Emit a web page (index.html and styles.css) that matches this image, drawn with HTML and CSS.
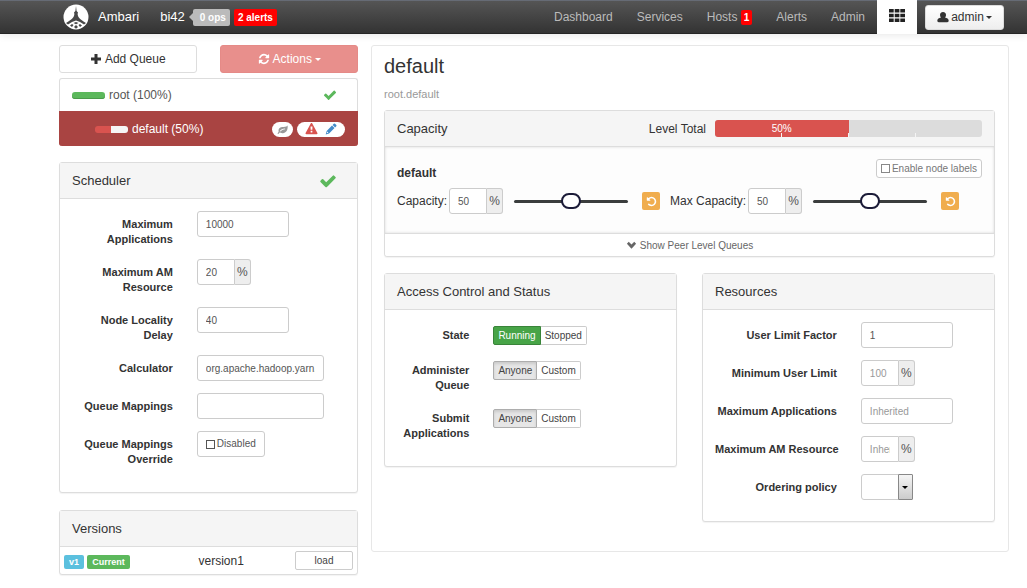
FILE: index.html
```html
<!DOCTYPE html>
<html lang="en">
<head>
  <meta charset="UTF-8" />
  <title>Ambari - Queue Manager</title>
  <link rel="stylesheet" href="styles.css">
</head>
<body>
  <svg class="sprite" aria-hidden="true">
    <symbol id="i-check" viewBox="0 0 1792 1792"><path d="M1671 566q0 40-28 68l-724 724-136 136q-28 28-68 28t-68-28l-136-136-362-362q-28-28-28-68t28-68l136-136q28-28 68-28t68 28l294 295 656-657q28-28 68-28t68 28l136 136q28 28 28 68z"/></symbol>
    <symbol id="i-plus" viewBox="0 0 12 12"><path d="M4.500 1h3v3.500h3.500v3h-3.500v3.500h-3v-3.500h-3.500v-3h3.500z"/></symbol>
    <symbol id="i-refresh" viewBox="0 0 1792 1792"><path d="M1639 1056q0 5-1 7-64 268-268 434.500t-478 166.500q-146 0-282.500-55t-243.500-157l-129 129q-19 19-45 19t-45-19-19-45v-448q0-26 19-45t45-19h448q26 0 45 19t19 45-19 45l-137 137q71 66 161 102t187 36q134 0 250-65t186-179q11-17 53-117 8-23 30-23h192q13 0 22.500 9.500t9.500 22.500zm25-800v448q0 26-19 45t-45 19h-448q-26 0-45-19t-19-45 19-45l138-138q-148-137-349-137-134 0-250 65t-186 179q-11 17-53 117-8 23-30 23h-199q-13 0-22.500-9.500t-9.500-22.500v-7q65-268 270-434.500t480-166.500q146 0 284 55.500t245 156.500l130-129q19-19 45-19t45 19 19 45z"/></symbol>
    <symbol id="i-warning" viewBox="0 0 1792 1792"><path d="M1024 1375v-190q0-14-9.500-23.500t-22.500-9.500h-192q-13 0-22.500 9.500t-9.500 23.500v190q0 14 9.500 23.500t22.500 9.500h192q13 0 22.500-9.500t9.500-23.500zm-2-374l18-459q0-12-10-19-13-11-24-11h-220q-11 0-24 11-10 7-10 21l17 457q0 10 10 16.500t24 6.500h185q14 0 23.500-6.500t10.500-16.500zm-14-934l768 1408q35 63-2 126-17 29-46.500 46t-63.500 17h-1536q-34 0-63.500-17t-46.500-46q-37-63-2-126l768-1408q17-31 47-49t65-18 65 18 47 49z"/></symbol>
    <symbol id="i-undo" viewBox="0 0 1792 1792"><path d="M1664 896q0 156-61 298t-164 245-245 164-298 61q-172 0-327-72.500t-264-204.500q-7-10-6.500-22.500t8.500-20.500l137-138q10-9 25-9 16 2 23 12 73 95 179 147t225 52q104 0 198.500-40.500t163.500-109.500 109.500-163.500 40.500-198.500-40.500-198.500-109.500-163.500-163.500-109.500-198.500-40.500q-98 0-188 35.500t-160 101.500l137 138q31 30 14 69-17 40-59 40h-448q-26 0-45-19t-19-45v-448q0-42 40-59 39-17 69 14l130 129q107-101 244.500-156.500t284.500-55.500q156 0 298 61t245 164 164 245 61 298z"/></symbol>
    <symbol id="i-chevron" viewBox="0 0 12 12"><path d="M1 4l2-2 3 3 3-3 2 2-5 5.500z"/></symbol>
    <symbol id="i-leaf" viewBox="0 0 12 12"><path d="M11.500 1.500c.5 3-.3 7-4 8.200-2 .6-3.700 0-4.600-.3L1.500 11l-1-.6 1.300-1.900C1 5.500 2.700 3.700 5.500 3.300c2.500-.3 4.500 0 6-1.800zM8.800 5C6 5 4.300 6 3 7.800l.6.4C5 6.600 6.500 5.800 8.800 5.600z"/></symbol>
    <symbol id="i-pencil" viewBox="0 0 12 12"><path d="M8.800.8q.6-.5 1.200 0L11.300 2q.5.600 0 1.200L10.100 4.400 7.600 1.900zM7 2.500L9.500 5l-5.400 5.400-3.400 1 1-3.400zM2.300 8.600l-.5 1.700 1.600-.5z"/></symbol>
    <symbol id="i-grid" viewBox="0 0 16 13"><path d="M0 0h4.700v3.500H0zM5.700 0h4.700v3.500H5.700zM11.300 0H16v3.500h-4.700zM0 4.700h4.700v3.500H0zM5.700 4.700h4.700v3.500H5.700zM11.300 4.700H16v3.500h-4.700zM0 9.400h4.700v3.500H0zM5.700 9.400h4.700v3.500H5.700zM11.300 9.400H16v3.500h-4.700z"/></symbol>
    <symbol id="i-user" viewBox="0 0 12 12"><path d="M6 1c2 0 3 1.400 3 3 0 1-.4 2-1 2.600 2 .4 3.700 1.200 3.700 3.200 0 .8-.6 1.400-1.400 1.400H1.700C.9 11.200.3 10.600.3 9.800c0-2 1.700-2.800 3.700-3.200C3.400 6 3 5 3 4c0-1.600 1-3 3-3z"/></symbol>
  </svg>

  <header class="navbar">
    <a class="brand" href="#">
      <svg class="logo" viewBox="0 0 26 26" aria-hidden="true">
        <circle cx="13" cy="13" r="12.500" fill="#fff"/>
        <path d="M13 2l.6 5 1.400 1.500-.4 1.500c.4 3.500 2.400 5.500 8.400 9l-2 1.500-4-2.500-4-1.500-4 1.500-4 2.500L3 19c6-3.500 8-5.500 8.400-9L11 8.500 12.400 7z" fill="#484848"/>
        <path d="M7 21.500l2-1.500 1.500 1L9 23zM10.500 19l2.500-1 2.500 1-2.500 1.200zM15.500 21L17 20l2 1.500-2 1.500zM11 23l2-2 2 2-2 1.700z" fill="#484848"/>
      </svg>
      Ambari
    </a>
    <a class="cluster" href="#">bi42</a>
    <a class="tag ops" href="#">0 ops</a>
    <a class="tag alerts" href="#">2 alerts</a>
    <nav class="menu">
      <a href="#">Dashboard</a>
      <a href="#">Services</a>
      <a href="#">Hosts <span class="count">1</span></a>
      <a href="#">Alerts</a>
      <a href="#">Admin</a>
      <a class="views" href="#" aria-label="Views"><svg class="icon grid-icon"><use href="#i-grid"/></svg></a>
    </nav>
    <button class="user" type="button"><svg class="icon"><use href="#i-user"/></svg> admin <span class="caret"></span></button>
  </header>

  <main class="container">
    <div class="sidebar">
      <div class="toolbar">
        <button class="btn add" type="button"><svg class="icon"><use href="#i-plus"/></svg> Add Queue</button>
        <button class="btn actions" type="button"><svg class="icon"><use href="#i-refresh"/></svg> Actions <span class="caret"></span></button>
      </div>

      <div class="queues">
        <a class="queue" href="#">
          <span class="bar green"></span> root (100%)
          <svg class="icon ok push"><use href="#i-check"/></svg>
        </a>
        <a class="queue child active" href="#">
          <span class="bar half"></span> default (50%)
          <span class="pill push leaf"><svg class="icon small"><use href="#i-leaf"/></svg></span>
          <span class="pill"><svg class="icon warn"><use href="#i-warning"/></svg><svg class="icon edit"><use href="#i-pencil"/></svg></span>
        </a>
      </div>

      <section class="panel scheduler">
        <div class="panel-heading">
          <h2>Scheduler</h2>
          <svg class="icon ok large push"><use href="#i-check"/></svg>
        </div>
        <form class="panel-body">
          <div class="row"><label for="maxApps">Maximum Applications</label><input class="field" id="maxApps" type="text" value="10000"></div>
          <div class="row"><label for="maxAm">Maximum AM Resource</label><div class="group"><input id="maxAm" type="text" value="20"><span>%</span></div></div>
          <div class="row"><label for="delay">Node Locality Delay</label><input class="field" id="delay" type="text" value="40"></div>
          <div class="row"><label for="calc">Calculator</label><input class="field long" id="calc" type="text" value="org.apache.hadoop.yarn.util.resource.DefaultResourceCalculator"></div>
          <div class="row"><label for="mappings">Queue Mappings</label><input class="field long" id="mappings" type="text"></div>
          <div class="row"><label for="override">Queue Mappings Override</label><label class="check"><input id="override" type="checkbox"> Disabled</label></div>
        </form>
      </section>

      <section class="panel versions">
        <div class="panel-heading"><h2>Versions</h2></div>
        <table>
          <tr>
            <td><span class="badge blue">v1</span> <span class="badge">Current</span></td>
            <td>version1</td>
            <td><button class="mini load" type="button">load</button></td>
          </tr>
        </table>
      </section>
    </div>

    <div class="content">
      <h1>default</h1>
      <p class="path">root.default</p>

      <section class="panel capacity">
        <div class="panel-heading">
          <h2>Capacity</h2>
          <span class="push">Level Total</span>
          <div class="progress">
            <div class="progress-bar" style="width: 50%">50%</div>
            <div class="ticks"><i></i><i></i><i></i><i></i></div>
          </div>
        </div>
        <div class="capacity-body">
          <div class="capacity-title">
            <strong>default</strong>
            <label class="check labels"><input type="checkbox"> Enable node labels</label>
          </div>
          <div class="sliders">
            <div class="slider">
              <label for="cap">Capacity:</label>
              <div class="group"><input id="cap" type="text" value="50"><span>%</span></div>
              <input type="range" min="0" max="100" value="50" aria-label="Capacity">
              <button class="undo" type="button" aria-label="Undo capacity"><svg class="icon small"><use href="#i-undo"/></svg></button>
            </div>
            <div class="slider">
              <label for="maxCap">Max Capacity:</label>
              <div class="group"><input id="maxCap" type="text" value="50"><span>%</span></div>
              <input type="range" min="0" max="100" value="50" aria-label="Max capacity">
              <button class="undo" type="button" aria-label="Undo max capacity"><svg class="icon small"><use href="#i-undo"/></svg></button>
            </div>
          </div>
        </div>
        <button class="peers" type="button"><svg class="icon small"><use href="#i-chevron"/></svg> Show Peer Level Queues</button>
      </section>

      <div class="columns">
        <section class="panel access">
          <div class="panel-heading"><h2>Access Control and Status</h2></div>
          <div class="panel-body">
            <div class="row"><span class="label">State</span><div class="toggle"><button class="mini running" type="button">Running</button><button class="mini" type="button">Stopped</button></div></div>
            <div class="row"><span class="label">Administer Queue</span><div class="toggle"><button class="mini pressed" type="button">Anyone</button><button class="mini" type="button">Custom</button></div></div>
            <div class="row"><span class="label">Submit Applications</span><div class="toggle"><button class="mini pressed" type="button">Anyone</button><button class="mini" type="button">Custom</button></div></div>
          </div>
        </section>

        <section class="panel resources">
          <div class="panel-heading"><h2>Resources</h2></div>
          <form class="panel-body">
            <div class="row"><label for="factor">User Limit Factor</label><input class="field" id="factor" type="text" value="1"></div>
            <div class="row"><label for="minLimit">Minimum User Limit</label><div class="group"><input id="minLimit" type="text" placeholder="100"><span>%</span></div></div>
            <div class="row"><label for="qApps">Maximum Applications</label><input class="field" id="qApps" type="text" placeholder="Inherited"></div>
            <div class="row"><label for="qAm">Maximum AM Resource</label><div class="group"><input id="qAm" type="text" placeholder="Inherited"><span>%</span></div></div>
            <div class="row"><label for="policy">Ordering policy</label><div class="select"><select id="policy"><option></option></select><span class="arrow"><span class="caret"></span></span></div></div>
          </form>
        </section>
      </div>
    </div>
  </main>
</body>
</html>
```
FILE: styles.css
```css
* { box-sizing: border-box; }
body { margin: 0; font-family: "Liberation Sans", Arial, sans-serif; font-size: 12px; line-height: 16px; color: #333; background: #fff; }
h1, h2, p { margin: 0; font-weight: normal; }
a { color: inherit; text-decoration: none; }
button, input, select { font-family: inherit; color: inherit; margin: 0; }

.sprite { position: absolute; width: 0; height: 0; }
.icon { width: 12px; height: 12px; fill: currentColor; flex: none; }
.icon.small { width: 11px; height: 11px; }
.icon.large { width: 18px; height: 18px; }
.icon.ok { color: #5cb85c; }
.push { margin-left: auto; }
.caret { display: inline-block; border: 3px solid transparent; border-top-color: currentColor; border-bottom: 0; }

/* top bar */
.navbar {
  display: flex; align-items: center; height: 34px; padding: 0 23px 0 63px;
  background: linear-gradient(#555, #333); color: #fff;
  border-top: 1px solid #666b75; border-bottom: 1px solid #252525;
  box-shadow: 0 1px 8px rgba(0,0,0,0.1);
}
.brand { display: flex; align-items: center; gap: 9px; font-size: 13px; margin-right: 21px; }
.logo { width: 26px; height: 26px; }
.cluster { font-size: 13px; margin-right: 8px; }
.tag { position: relative; padding: 0 4px; border-radius: 2px; font-size: 10px; font-weight: bold; line-height: 17px; }
.ops { background: #bbb; margin-right: 4px; padding-left: 7px; }
.ops::before { content: ""; position: absolute; left: -4px; top: 4px; border: 4px solid transparent; border-right-color: #bbb; border-left: 0; }
.alerts { background: #f00; }
.menu { display: flex; align-items: center; margin-left: auto; color: #bbb; }
.menu a { padding: 0 12px; }
.count { display: inline-block; background: #f00; color: #fff; font-size: 10px; font-weight: bold; line-height: 15px; padding: 0 3px; border-radius: 2px; }
.menu .views { display: flex; align-items: center; height: 34px; padding-bottom: 3px; background: #fff; color: #222; }
.grid-icon { width: 16px; height: 13px; }
.user {
  display: flex; align-items: center; justify-content: center; gap: 2px;
  width: 79px; height: 25px; margin-left: 8px; padding: 0; font-size: 12px; color: #333;
  background: linear-gradient(#fff, #eee); border: 1px solid #ddd; border-radius: 3px;
}

.container { display: grid; grid-template-columns: 299px 1fr; gap: 13px; align-items: start; padding: 11px 18px 14px 59px; }

/* left side */
.toolbar { display: flex; justify-content: space-between; margin-bottom: 5px; }
.btn { display: flex; align-items: center; justify-content: center; gap: 3px; width: 46%; height: 28px; border: 1px solid #ddd; border-radius: 3px; background: #fff; font-size: 12px; }
.actions { background: #e88f8c; border-color: #e58a87; color: #fff; }
.queues { margin-bottom: 16px; }
.queue { display: flex; align-items: center; gap: 4px; height: 33px; padding: 0 12px; border: 1px solid #ddd; border-bottom: 0; border-radius: 3px 3px 0 0; color: #555; }
.queue .ok { margin-right: 8px; width: 14px; height: 14px; }
.child { height: 35px; padding-left: 35px; border-radius: 0 0 3px 3px; }
.active { background: #a94442; border-color: #a94442; color: #fff; }
.bar { width: 33px; height: 7px; border-radius: 3px; }
.green { background: #5cb85c; box-shadow: inset 0 -1px 0 #4a9a4a; }
.half { background: linear-gradient(90deg, #d9534f 50%, #f5f5f5 50%); }
.pill { display: flex; align-items: center; gap: 7px; height: 15px; padding: 0 8px; border-radius: 8px; background: #fff; }
.leaf { padding: 0 5px; color: #999; }
.warn { width: 13px; color: #d9534f; }
.edit { color: #428bca; }

/* panels */
.panel { border: 1px solid #ddd; border-radius: 3px; background: #fff; box-shadow: 0 1px 1px rgba(0,0,0,0.05); }
.panel-heading { display: flex; align-items: center; height: 36px; padding: 0 12px; background: #f5f5f5; border-bottom: 1px solid #ddd; }
.panel-heading h2 { font-size: 13px; }
.panel-heading .ok { margin-right: 8px; }
.panel-body { padding: 12px 0; }
.row { display: grid; grid-template-columns: 38% 1fr; gap: 24px; align-items: start; min-height: 23px; margin-bottom: 12px; }
.row:last-child { margin-bottom: 13px; }
.row > label:first-child, .label { padding: 6px 0 0 12px; font-size: 11px; font-weight: bold; line-height: 15px; text-align: right; }

.field, .group input, .select select {
  height: 26px; padding: 0 8px; font-size: 10px; color: #555;
  border: 1px solid #ccc; border-radius: 3px; background: #fff; outline: none;
}
.field { width: 92px; }
.long { width: 127px; }
.group { display: flex; width: 54px; }
.group input { width: 38px; border-radius: 3px 0 0 3px; }
.group span { flex: 1; text-align: center; line-height: 24px; color: #555; background: #eee; border: 1px solid #ccc; border-left: 0; border-radius: 0 3px 3px 0; }
::placeholder { color: #999; opacity: 1; }
.check { display: flex; align-items: center; justify-self: start; gap: 2px; height: 26px; padding: 0 8px; border: 1px solid #ccc; border-radius: 3px; font-size: 10px; color: #555; background: #fff; }
.check input { appearance: none; width: 9px; height: 9px; border: 1px solid #555; background: #fff; }
.mini { height: 19px; padding: 0 4px; font-size: 10px; color: #444; background: #fff; border: 1px solid #ccc; border-radius: 2px; }

.scheduler { margin-bottom: 17px; }
.versions table { width: 100%; border-collapse: collapse; table-layout: fixed; }
.versions td { height: 27px; padding: 0 4px; }
.versions td:nth-child(2) { width: 35%; padding-left: 42px; }
.versions td:last-child { text-align: right; }
.badge { display: inline-block; padding: 0 5px; border-radius: 2px; background: #5cb85c; color: #fff; font-size: 9px; font-weight: bold; line-height: 14px; }
.blue { background: #5bc0de; }
.load { width: 58px; }

/* selected queue */
.content { padding: 8px 13px 29px 12px; border: 1px solid #e7e7e7; border-radius: 3px; }
h1 { font-size: 20px; line-height: 24px; }
.path { margin: 8px 0; font-size: 11px; color: #999; }
.capacity { margin-bottom: 16px; }
.progress { position: relative; width: 267px; height: 17px; margin-left: 9px; background: #dcdcdc; border-radius: 3px; overflow: hidden; }
.progress-bar { height: 100%; background: #d9534f; color: #fff; font-size: 10px; line-height: 17px; text-align: center; }
.ticks { position: absolute; left: 0; right: 0; bottom: 0; display: flex; }
.ticks i { flex: 1; height: 4px; border-right: 1px solid #f5f5f5; }
.ticks i:last-child { border-right: 0; }
.capacity-body { height: 86px; padding: 12px; background: #fdfdfd; box-shadow: inset 0 0 3px rgba(0,0,0,0.15); }
.capacity-title { display: flex; justify-content: space-between; align-items: flex-start; }
.capacity-title strong { padding-top: 6px; }
.labels { height: 19px; padding: 0 4px; color: #777; }
.labels input { border-color: #888; }
.sliders { display: flex; gap: 10px; margin-top: 7px; }
.slider { display: flex; align-items: center; }
.slider .group { margin: 0 11px 0 2px; }
.slider input[type=range] { appearance: none; width: 114px; height: 16px; margin-right: 14px; background: transparent; }
.slider input[type=range]::-webkit-slider-runnable-track { height: 3px; border-radius: 2px; background: #3a3d3d; }
.slider input[type=range]::-webkit-slider-thumb { appearance: none; width: 20px; height: 16px; margin-top: -7px; border: 2px solid #1b1b38; border-radius: 8px; background: #fff; }
.undo { display: flex; align-items: center; justify-content: center; width: 18px; height: 18px; padding: 0; border: 0; border-radius: 2px; background: #f0ad4e; color: #fff; }
.peers { display: flex; align-items: center; justify-content: center; gap: 3px; width: 100%; height: 23px; padding: 0; border: 0; border-top: 1px solid #ddd; border-radius: 0 0 3px 3px; background: #fff; font-size: 10px; color: #666; }
.columns { display: grid; grid-template-columns: 1fr 1fr; gap: 25px; align-items: start; }
.access .row { grid-template-columns: 29% 1fr; }
.toggle { display: flex; padding-top: 4px; }
.toggle .mini:first-child { border-radius: 2px 0 0 2px; }
.toggle .mini:last-child { border-left: 0; border-radius: 0 2px 2px 0; }
.toggle .running { background: #47a447; border-color: #398439; color: #fff; }
.toggle .pressed { background: #e6e6e6; border-color: #adadad; box-shadow: inset 0 2px 3px rgba(0,0,0,0.12); }
.resources .panel-body { padding-bottom: 8px; }
.resources .row { grid-template-columns: 46% 1fr; }
.resources label { white-space: nowrap; }
.select { position: relative; width: 52px; }
.select select { appearance: none; width: 100%; }
.arrow { position: absolute; top: 0; right: 0; display: flex; align-items: center; justify-content: center; width: 15px; height: 26px; border: 1px solid #888; border-radius: 1px; background: linear-gradient(#f5f5f5, #ccc); color: #000; pointer-events: none; }
```
